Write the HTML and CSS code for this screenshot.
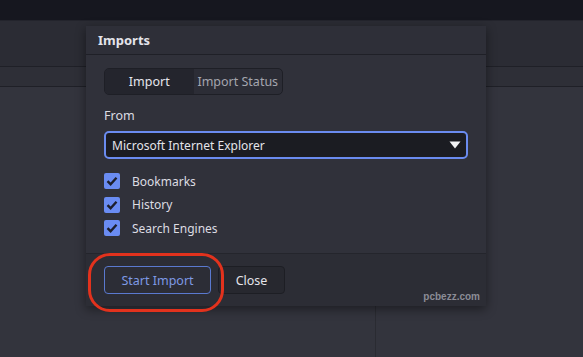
FILE: index.html
```html
<!DOCTYPE html>
<html lang="en">
<head>
    <meta charset="UTF-8">
    <title>Imports</title>
    <link rel="stylesheet" href="styles.css">
</head>
<body>
    <div class="topbar"></div>
    <div class="toolbar"></div>
    <div class="strip"></div>
    <div class="content">
        <div class="pane"></div>
        <div class="pane side"></div>
    </div>

    <!-- Imports dialog -->
    <div class="dialog">
        <div class="dialog-head">Imports</div>
        <div class="dialog-body">
            <div class="tabs">
                <span class="tab active">Import</span>
                <span class="tab">Import Status</span>
            </div>

            <div class="label">From</div>
            <div class="select">
                <span>Microsoft Internet Explorer</span>
                <svg width="12" height="8" viewBox="0 0 12 8"><path d="M0.5 0.5 L11.5 0.5 L6 7.5 Z" fill="#f2f2f5"/></svg>
            </div>

            <div class="checks">
                <label class="check"><span class="box"><svg width="12" height="10" viewBox="0 0 12 10"><path d="M1.5 5.2 L4.6 8.2 L10.5 1.8" fill="none" stroke="#1d1f2b" stroke-width="2.4"/></svg></span>Bookmarks</label>
                <label class="check"><span class="box"><svg width="12" height="10" viewBox="0 0 12 10"><path d="M1.5 5.2 L4.6 8.2 L10.5 1.8" fill="none" stroke="#1d1f2b" stroke-width="2.4"/></svg></span>History</label>
                <label class="check"><span class="box"><svg width="12" height="10" viewBox="0 0 12 10"><path d="M1.5 5.2 L4.6 8.2 L10.5 1.8" fill="none" stroke="#1d1f2b" stroke-width="2.4"/></svg></span>Search Engines</label>
            </div>
        </div>
        <div class="dialog-foot">
            <button class="btn primary">Start Import</button>
            <button class="btn close">Close</button>
            <span class="ring"></span>
            <span class="mark">pcbezz.com</span>
        </div>
    </div>
</body>
</html>
```

FILE: styles.css
```css
html, body {
    margin: 0;
    height: 100%;
}
body {
    background: #33343d;
    font-family: "Noto Sans", sans-serif;
    font-size: 12px;
    color: #dcdce2;
    overflow: hidden;
    position: relative;
}
.topbar {
    height: 20px;
    background: #16171f;
    border-bottom: 1px solid #23242c;
}
.toolbar {
    height: 45px;
    background: #2b2c34;
}
.strip {
    height: 19px;
    background: #2e2f37;
    border-top: 1px solid #1f2027;
    border-bottom: 1px solid #1f2027;
}
.content {
    display: grid;
    grid-template-columns: 375px 1fr;
    height: 270px;
}
.side {
    border-left: 1px solid #2a2b32;
}

/* dialog */
.dialog {
    position: absolute;
    left: 86px;
    top: 26px;
    width: 400px;
    background: #30313a;
    box-shadow: 0 3px 10px rgba(0, 0, 0, 0.45);
}
.dialog-head {
    height: 28px;
    line-height: 28px;
    padding-left: 12px;
    font-weight: bold;
    font-size: 13px;
    color: #e4e4ea;
    background: #2e2f38;
    border-bottom: 1px solid #1f2027;
}
.dialog-body {
    padding: 13px 18px 17px;
    border-bottom: 1px solid #24252c;
}
.tabs {
    display: inline-flex;
    width: 179px;
    height: 27px;
    box-sizing: border-box;
    border: 1px solid #1e1f26;
    border-radius: 5px;
    overflow: hidden;
    background: #2c2d36;
}
.tab {
    flex: 1;
    text-align: center;
    line-height: 25px;
    color: #a4a5ae;
    font-size: 12.5px;
}
.tab.active {
    background: #24252d;
    color: #e6e6ec;
}
.label {
    margin-top: 12px;
    line-height: 18px;
    font-size: 12.5px;
    color: #dcdce2;
}
.select {
    margin-top: 6px;
    height: 28px;
    box-sizing: border-box;
    border: 2px solid #6a8bef;
    border-radius: 5px;
    background: #1b1c22;
    display: flex;
    align-items: center;
    justify-content: space-between;
    padding: 0 5px 0 6px;
    color: #e4e4ea;
}
.checks {
    margin-top: 14px;
    display: flex;
    flex-direction: column;
    gap: 7.5px;
}
.check {
    display: flex;
    align-items: center;
    height: 16px;
    color: #dcdce2;
}
.box {
    width: 16px;
    height: 16px;
    margin-right: 12px;
    border-radius: 2px;
    background: #6a8cf2;
    display: flex;
    align-items: center;
    justify-content: center;
}
.dialog-foot {
    position: relative;
    height: 52px;
    background: #2c2d35;
    display: flex;
    align-items: center;
    gap: 7px;
    padding-left: 18px;
}
.btn {
    height: 28px;
    box-sizing: border-box;
    font-family: inherit;
    font-size: 12.5px;
    white-space: nowrap;
    border-radius: 4px;
    background: #27282f;
    border: 1px solid #1d1e24;
    color: #e4e4ea;
    padding: 0;
}
.btn.primary {
    width: 107px;
    background: #2c2d36;
    border-color: #5a79cf;
    color: #7e99e4;
}
.btn.close {
    width: 67px;
}
.ring {
    position: absolute;
    left: 2px;
    top: -1px;
    width: 130px;
    height: 53px;
    border: 3px solid #e2321d;
    border-radius: 22px;
}
.mark {
    position: absolute;
    right: 6px;
    bottom: 4px;
    font-family: "Liberation Sans", sans-serif;
    font-weight: bold;
    font-size: 10px;
    color: #8b8c96;
}
```
